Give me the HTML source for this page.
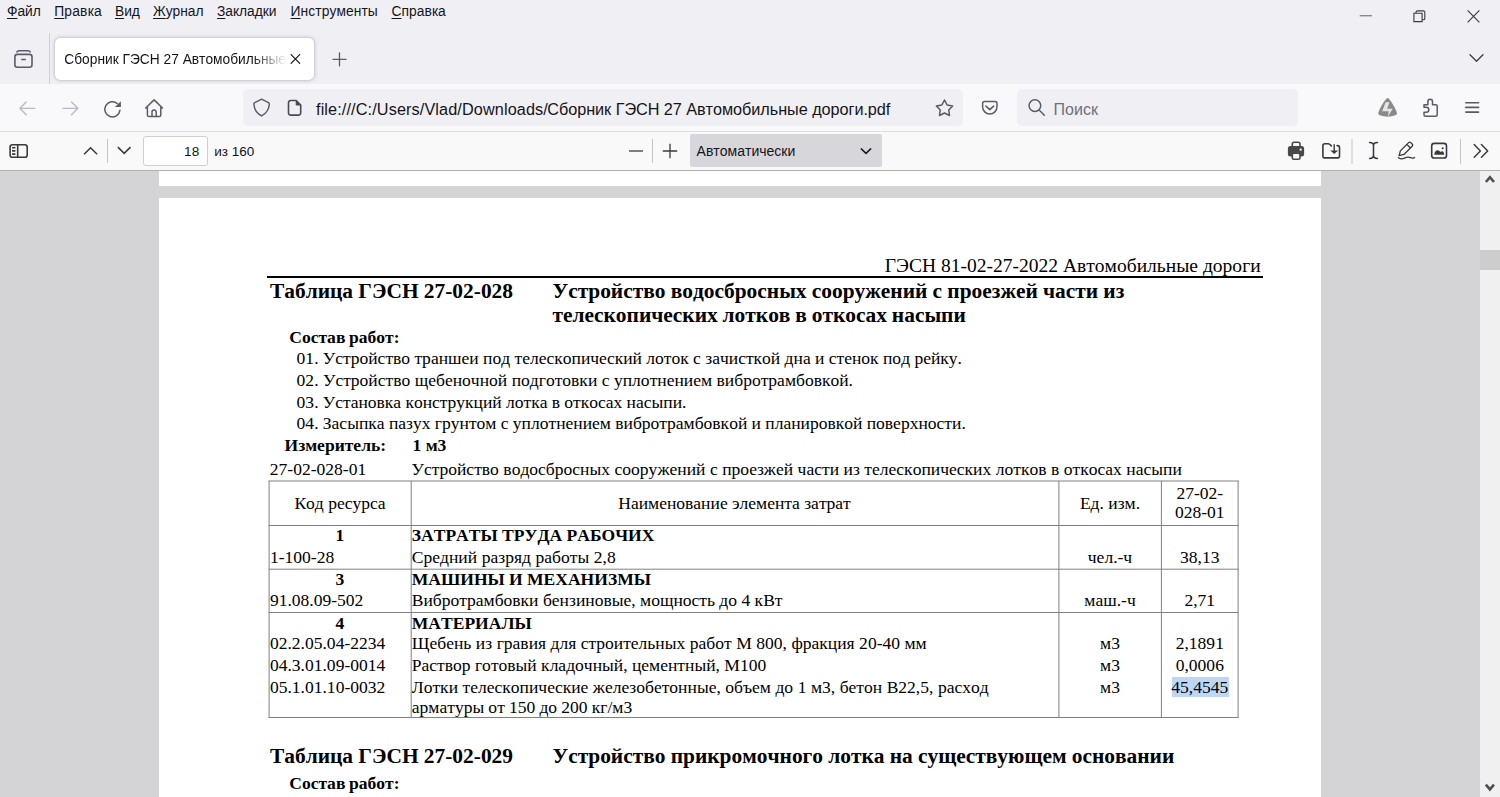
<!DOCTYPE html>
<html lang="ru">
<head>
<meta charset="utf-8">
<title>Сборник ГЭСН 27 Автомобильные дороги.pdf</title>
<style>
*{box-sizing:border-box}
html,body{margin:0;padding:0}
body{width:1500px;height:797px;overflow:hidden;position:relative;background:#d4d4d7;font-family:"Liberation Serif",serif;color:#000}
.t{position:absolute;line-height:1;white-space:pre;font-family:"Liberation Serif",serif;color:#000;font-kerning:none}
.t.s{font-family:"Liberation Sans",sans-serif}
.t u{text-decoration:underline;text-decoration-thickness:1px;text-underline-offset:1.5px}
.ic{position:absolute;display:block;overflow:visible}
#titlebar{position:absolute;left:0;top:0;width:1500px;height:84px;background:#f0f0f4}
#navbar{position:absolute;left:0;top:84px;width:1500px;height:48px;background:#f9f9fb;border-bottom:1px solid #dcdce1}
#pdfbar{position:absolute;left:0;top:132px;width:1500px;height:39px;background:#f9f9fa;border-bottom:1px solid #b0b0b2}
#tab{position:absolute;left:55px;top:38px;width:259px;height:41.500px;background:#fff;border-radius:5px;box-shadow:0 0 4px rgba(60,60,80,.34),0 0 1px rgba(60,60,80,.3)}
.field{position:absolute;background:#f0f0f4;border-radius:5px}
.vsep{position:absolute;width:1px}
#pgin{position:absolute;left:143px;top:136px;width:65px;height:30px;background:#fff;border:1px solid #cfcfd3;border-radius:3px}
#zsel{position:absolute;left:690px;top:134px;width:191.500px;height:33px;background:#d7d7db;border-radius:2px}
#viewer{position:absolute;left:0;top:171px;width:1479px;height:626px;background:#d4d4d7;overflow:hidden}
.page{position:absolute;left:158.500px;width:1162.500px;background:#fff}
.rule{position:absolute;background:#000}
.sel{position:absolute;background:#bfd7f6}
#sb{position:absolute;left:1479.500px;top:171px;width:20.500px;height:626px;background:#f0f0f0}
#sb .thumb{position:absolute;left:0;top:79px;width:20.500px;height:20px;background:#cdcdcd}
</style>
</head>
<body>
<main id="document">
<div id="viewer">
<div class="page" style="top:0;height:15px"></div>
<div class="page" style="top:27px;height:640px"></div>
</div>
<div class="t" style="top:256.28px;font-size:19.55px;left:360.5999999999999px;width:900px;text-align:right;">ГЭСН 81-02-27-2022 Автомобильные дороги</div>
<div class="rule" style="left:266.5px;top:276px;width:996px;height:2px"></div>
<div class="t" style="top:281.01px;font-size:21.42px;left:270px;font-weight:bold;word-spacing:-0.102px;">Таблица ГЭСН 27-02-028</div>
<div class="t" style="top:281.01px;font-size:21.42px;left:552.5px;font-weight:bold;word-spacing:-0.104px;">Устройство водосбросных сооружений с проезжей части из</div>
<div class="t" style="top:305.01px;font-size:21.42px;left:552.5px;font-weight:bold;word-spacing:-0.441px;">телескопических лотков в откосах насыпи</div>
<div class="t" style="top:329.25px;font-size:17.55px;left:289.3px;font-weight:bold;word-spacing:-0.738px;">Состав работ:</div>
<div class="t" style="top:350.35px;font-size:17.55px;left:296.6px;word-spacing:-0.034px;">01. Устройство траншеи под телескопический лоток с зачисткой дна и стенок под рейку.</div>
<div class="t" style="top:371.95px;font-size:17.55px;left:296.6px;word-spacing:0.082px;">02. Устройство щебеночной подготовки с уплотнением вибротрамбовкой.</div>
<div class="t" style="top:393.55px;font-size:17.55px;left:296.6px;word-spacing:-0.108px;">03. Установка конструкций лотка в откосах насыпи.</div>
<div class="t" style="top:415.15px;font-size:17.55px;left:296.6px;word-spacing:-0.087px;">04. Засыпка пазух грунтом с уплотнением вибротрамбовкой и планировкой поверхности.</div>
<div class="t" style="top:436.75px;font-size:17.55px;left:284.5px;font-weight:bold;">Измеритель:</div>
<div class="t" style="top:436.75px;font-size:17.55px;left:412.5px;font-weight:bold;">1 м3</div>
<div class="t" style="top:461.45px;font-size:17.55px;left:269.8px;">27-02-028-01</div>
<div class="t" style="top:461.45px;font-size:17.55px;left:411.6px;word-spacing:0.126px;">Устройство водосбросных сооружений с проезжей части из телескопических лотков в откосах насыпи</div>
<svg class="ic" style="left:0;top:0" width="1500" height="797" viewBox="0 0 1500 797"><path d="M268.6 481.0H1238.6M268.6 525.5H1238.6M268.6 569.2H1238.6M268.6 612.5H1238.6M268.6 717.5H1238.6M269.1 481.0V717.5M411.2 481.0V717.5M1058.9 481.0V717.5M1161.4 481.0V717.5M1238.1 481.0V717.5" fill="none" stroke="#808080" stroke-width="1"/></svg>
<div class="sel" style="left:1172px;top:677px;width:57px;height:20px"></div>
<div class="t" style="top:495.25px;font-size:17.55px;left:40px;width:600px;text-align:center;">Код ресурса</div>
<div class="t" style="top:495.25px;font-size:17.55px;left:434.5px;width:600px;text-align:center;">Наименование элемента затрат</div>
<div class="t" style="top:495.25px;font-size:17.55px;left:810px;width:600px;text-align:center;">Ед. изм.</div>
<div class="t" style="top:484.65px;font-size:17.55px;left:899.8px;width:600px;text-align:center;">27-02-</div>
<div class="t" style="top:504.25px;font-size:17.55px;left:899.8px;width:600px;text-align:center;">028-01</div>
<div class="t" style="top:527.35px;font-size:17.55px;left:40px;width:600px;text-align:center;font-weight:bold;">1</div>
<div class="t" style="top:527.35px;font-size:17.55px;left:411.8px;font-weight:bold;word-spacing:0.047px;">ЗАТРАТЫ ТРУДА РАБОЧИХ</div>
<div class="t" style="top:549.15px;font-size:17.55px;left:269.9px;">1-100-28</div>
<div class="t" style="top:549.15px;font-size:17.55px;left:411.8px;word-spacing:0.211px;">Средний разряд работы 2,8</div>
<div class="t" style="top:549.15px;font-size:17.55px;left:810px;width:600px;text-align:center;">чел.-ч</div>
<div class="t" style="top:549.15px;font-size:17.55px;left:899.8px;width:600px;text-align:center;">38,13</div>
<div class="t" style="top:570.75px;font-size:17.55px;left:40px;width:600px;text-align:center;font-weight:bold;">3</div>
<div class="t" style="top:570.75px;font-size:17.55px;left:411.8px;font-weight:bold;word-spacing:-0.052px;">МАШИНЫ И МЕХАНИЗМЫ</div>
<div class="t" style="top:591.95px;font-size:17.55px;left:269.9px;">91.08.09-502</div>
<div class="t" style="top:591.95px;font-size:17.55px;left:411.8px;word-spacing:0.012px;">Вибротрамбовки бензиновые, мощность до 4 кВт</div>
<div class="t" style="top:591.95px;font-size:17.55px;left:810px;width:600px;text-align:center;">маш.-ч</div>
<div class="t" style="top:591.95px;font-size:17.55px;left:899.8px;width:600px;text-align:center;">2,71</div>
<div class="t" style="top:614.65px;font-size:17.55px;left:40px;width:600px;text-align:center;font-weight:bold;">4</div>
<div class="t" style="top:614.65px;font-size:17.55px;left:411.8px;font-weight:bold;">МАТЕРИАЛЫ</div>
<div class="t" style="top:635.45px;font-size:17.55px;left:269.9px;">02.2.05.04-2234</div>
<div class="t" style="top:635.45px;font-size:17.55px;left:411.8px;word-spacing:0.106px;">Щебень из гравия для строительных работ М 800, фракция 20-40 мм</div>
<div class="t" style="top:635.45px;font-size:17.55px;left:810px;width:600px;text-align:center;">м3</div>
<div class="t" style="top:635.45px;font-size:17.55px;left:899.8px;width:600px;text-align:center;">2,1891</div>
<div class="t" style="top:656.95px;font-size:17.55px;left:269.9px;">04.3.01.09-0014</div>
<div class="t" style="top:656.95px;font-size:17.55px;left:411.8px;word-spacing:-0.029px;">Раствор готовый кладочный, цементный, М100</div>
<div class="t" style="top:656.95px;font-size:17.55px;left:810px;width:600px;text-align:center;">м3</div>
<div class="t" style="top:656.95px;font-size:17.55px;left:899.8px;width:600px;text-align:center;">0,0006</div>
<div class="t" style="top:678.65px;font-size:17.55px;left:269.9px;">05.1.01.10-0032</div>
<div class="t" style="top:678.65px;font-size:17.55px;left:411.8px;word-spacing:0.117px;">Лотки телескопические железобетонные, объем до 1 м3, бетон В22,5, расход</div>
<div class="t" style="top:678.65px;font-size:17.55px;left:810px;width:600px;text-align:center;">м3</div>
<div class="t" style="top:678.65px;font-size:17.55px;left:899.8px;width:600px;text-align:center;">45,4545</div>
<div class="t" style="top:698.75px;font-size:17.55px;left:411.8px;word-spacing:-0.211px;">арматуры от 150 до 200 кг/м3</div>
<div class="t" style="top:745.91px;font-size:21.42px;left:270px;font-weight:bold;word-spacing:-0.102px;">Таблица ГЭСН 27-02-029</div>
<div class="t" style="top:745.91px;font-size:21.42px;left:552.5px;font-weight:bold;word-spacing:-0.124px;">Устройство прикромочного лотка на существующем основании</div>
<div class="t" style="top:775.25px;font-size:17.55px;left:289.3px;font-weight:bold;word-spacing:-0.738px;">Состав работ:</div>
<div id="sb"><div class="thumb"></div></div>
<svg class="ic" style="left:0;top:0" width="1500" height="797" viewBox="0 0 1500 797"><path d="M1485.900 182L1489.950 177.200L1494 182M1485.850 784.600L1489.900 789.400L1493.950 784.600" fill="none" stroke="#4f4f4f" stroke-width="2.600"/></svg>
</main>
<header id="chrome">
<div id="titlebar"></div>
<div id="navbar"></div>
<div id="pdfbar"></div>
<div class="t s" style="top:5.10px;font-size:13.8px;left:7px;color:#15141a;letter-spacing:-0.059px;"><u>Ф</u>айл</div>
<div class="t s" style="top:5.10px;font-size:13.8px;left:54.2px;color:#15141a;letter-spacing:0.215px;"><u>П</u>равка</div>
<div class="t s" style="top:5.10px;font-size:13.8px;left:115px;color:#15141a;letter-spacing:-0.090px;"><u>В</u>ид</div>
<div class="t s" style="top:5.10px;font-size:13.8px;left:153px;color:#15141a;letter-spacing:-0.029px;"><u>Ж</u>урнал</div>
<div class="t s" style="top:5.10px;font-size:13.8px;left:217px;color:#15141a;letter-spacing:-0.022px;"><u>З</u>акладки</div>
<div class="t s" style="top:5.10px;font-size:13.8px;left:290.6px;color:#15141a;letter-spacing:0.078px;"><u>И</u>нструменты</div>
<div class="t s" style="top:5.10px;font-size:13.8px;left:391.5px;color:#15141a;letter-spacing:0.067px;"><u>С</u>правка</div>
<svg class="ic" style="left:1359px;top:9px" width="14" height="14" viewBox="0 0 14 14"><path d="M0.700 6.700H13" stroke="#88888e" stroke-width="1.400" fill="none"/></svg>
<svg class="ic" style="left:1413px;top:10px" width="13" height="13" viewBox="0 0 13 13"><path d="M0.9 3.2h8.2v8.4H0.9z M3 3.2V2.2a1.3 1.3 0 0 1 1.3-1.3h6.2a1.3 1.3 0 0 1 1.3 1.3v6.2a1.3 1.3 0 0 1-1.3 1.3H9.1" stroke="#3a3944" stroke-width="1.1" fill="none"/></svg>
<svg class="ic" style="left:1467px;top:10px" width="13" height="13" viewBox="0 0 13 13"><path d="M0.6 0.4L12.4 12.4M12.4 0.4L0.6 12.4" stroke="#3a3944" stroke-width="1.15" fill="none"/></svg>
<div class="vsep" style="left:49px;top:33px;height:51px;background:#cfcfd8"></div>
<div id="tab"></div>
<div class="t s" style="top:53.04px;font-size:13.75px;left:64.3px;color:#15141a;width:223px;overflow:hidden;-webkit-mask-image:linear-gradient(to right,#000 188px,transparent 223px);mask-image:linear-gradient(to right,#000 188px,transparent 223px);">Сборник ГЭСН 27 Автомобильные</div>
<svg class="ic" style="left:1469px;top:53px" width="16" height="10" viewBox="0 0 16 10"><path d="M1 1.7L7.5 8.2L14 1.7" stroke="#3a3944" stroke-width="1.3" fill="none" stroke-linecap="round" stroke-linejoin="round"/></svg>
<svg class="ic" style="left:18.45px;top:99.15px;color:#b9b9c0;" width="18.7" height="18.7" viewBox="0 0 16 16"><path d="M14.4 8H1.8M7 2.6L1.6 8L7 13.4" fill="none" stroke="currentColor" stroke-width="1.2" stroke-linecap="round" stroke-linejoin="round"/></svg>
<svg class="ic" style="left:61.25px;top:99.15px;color:#b9b9c0;" width="18.7" height="18.7" viewBox="0 0 16 16"><path d="M1.6 8H14.2M9 2.6L14.4 8L9 13.4" fill="none" stroke="currentColor" stroke-width="1.2" stroke-linecap="round" stroke-linejoin="round"/></svg>
<div class="field" style="left:243px;top:89px;width:720px;height:37px"></div>
<div class="t s" style="top:101.19px;font-size:16.24px;left:316px;color:#15141a;letter-spacing:0.116px;">file:///C:/Users/Vlad/Downloads/</div>
<div class="t s" style="top:101.19px;font-size:16.24px;left:547.3px;color:#15141a;letter-spacing:-0.048px;">Сборник ГЭСН 27 Автомобильные дороги.pdf</div>
<div class="field" style="left:1017px;top:89px;width:281px;height:37px"></div>
<div class="t s" style="top:101.88px;font-size:16.0px;left:1053.6px;color:#6f6f7b;">Поиск</div>
<div class="vsep" style="left:107px;top:139px;height:23.500px;background:#c4c4c8"></div>
<div id="pgin"></div>
<div class="t s" style="top:144.97px;font-size:13.6px;left:-700.8px;width:900px;text-align:right;color:#15141a;">18</div>
<div class="t s" style="top:145.05px;font-size:13.5px;left:214.2px;color:#15141a;">из 160</div>
<svg class="ic" style="left:628px;top:143px" width="16" height="16" viewBox="0 0 16 16"><path d="M1 8H15" stroke="#3a3a3e" stroke-width="1.3" fill="none"/></svg>
<div class="vsep" style="left:652px;top:139px;height:23.5px;background:#c4c4c8"></div>
<svg class="ic" style="left:662px;top:143px" width="16" height="16" viewBox="0 0 16 16"><path d="M0.8 8H15.2M8 0.8V15.2" stroke="#3a3a3e" stroke-width="1.3" fill="none"/></svg>
<div id="zsel"></div>
<div class="t s" style="top:144.04px;font-size:14.0px;left:696.6px;color:#15141a;">Автоматически</div>
<svg class="ic" style="left:860px;top:147px" width="12" height="9" viewBox="0 0 12 9"><path d="M1.3 1.9L6 6.4L10.7 1.9" stroke="#1c1b22" stroke-width="1.5" fill="none" stroke-linecap="round" stroke-linejoin="round"/></svg>
<div class="vsep" style="left:1351px;top:138.500px;height:25px;width:2px;background:#dedee1"></div>
<svg class="ic" style="left:1364.00px;top:141.30px;color:#3a3a3e;" width="19" height="19" viewBox="0 0 16 16"><path d="M4.700 1.200c2 0 3.300 .9 3.300 2.700c0-1.800 1.300-2.700 3.300-2.700M4.700 14.800c2 0 3.300-.9 3.300-2.700c0 1.800 1.300 2.700 3.300 2.700M8 3.900v8.200" fill="none" stroke="currentColor" stroke-width="1.300" stroke-linecap="round"/></svg>
<div class="vsep" style="left:1460px;top:138.500px;height:25px;background:#c4c4c8"></div>
<svg class="ic" style="left:0;top:0" width="1500" height="797" viewBox="0 0 1500 797"><g fill="none" stroke="#5b5b66" stroke-width="1.6" stroke-linecap="round"><rect x="14.9" y="54.4" width="17.1" height="12.8" rx="2.4"/><path d="M16.9 51.9Q17.5 50.7 19 50.7H28Q29.500 50.7 30.100 51.9M21.800 59.500H25.200"/></g><path d="M291.100 54.700L299.700 63.300M299.700 54.700L291.100 63.300" stroke="#15141a" stroke-width="1.200" fill="none" stroke-linecap="round"/><path d="M339.500 52.800V65.800M333 59.300H346" stroke="#5b5b66" stroke-width="1.300" fill="none" stroke-linecap="round"/><path d="M119.93 110.36A7.6 7.6 0 1 1 117.3 103.5" fill="none" stroke="#5b5b66" stroke-width="1.5" stroke-linecap="round"/><path d="M120.9 101.2V106.9H114.9z" fill="#5b5b66"/><path d="M145.7 108L154.1 99.900L162.500 108M147.400 106.300V115a1.600 1.600 0 0 0 1.600 1.600h10.200a1.600 1.600 0 0 0 1.600-1.600V106.300M152 116.400V112a2.100 2.100 0 0 1 4.200 0V116.400" fill="none" stroke="#5b5b66" stroke-width="1.500" stroke-linecap="round" stroke-linejoin="round"/><path d="M261.600 99.200L268.400 102.600Q269.400 103.100 269.300 104.200C268.900 109.600 266.600 113.200 261.600 115.900C256.600 113.200 254.300 109.600 253.900 104.200Q253.800 103.100 254.800 102.600z" fill="none" stroke="#5b5b66" stroke-width="1.500" stroke-linejoin="round"/><path d="M290.700 100.500H296.200L300.700 105V112.900a2.200 2.200 0 0 1-2.200 2.200H290.700a2.200 2.200 0 0 1-2.200-2.200V102.700a2.200 2.200 0 0 1 2.200-2.200z" fill="none" stroke="#4a4a55" stroke-width="1.600" stroke-linejoin="round"/><path d="M295.700 100.300V104.300a1.300 1.300 0 0 0 1.300 1.300H301z" fill="#4a4a55"/><path d="M944.50 100.00L947.12 104.97L952.65 105.92L948.73 109.95L949.54 115.50L944.50 113.02L939.46 115.50L940.27 109.95L936.35 105.92L941.88 104.97z" fill="none" stroke="#5b5b66" stroke-width="1.500" stroke-linejoin="round"/><path d="M984.600 101.500H995a2 2 0 0 1 2 2V106.800a7.200 7.200 0 0 1-14.400 0V103.500a2 2 0 0 1 2-2z" fill="none" stroke="#5b5b66" stroke-width="1.500"/><path d="M985.900 106.100L989.800 109.600L993.700 106.100" fill="none" stroke="#5b5b66" stroke-width="1.500" stroke-linecap="round" stroke-linejoin="round"/><circle cx="1034.900" cy="105.600" r="5.850" fill="none" stroke="#5b5b66" stroke-width="1.500"/><path d="M1039.100 109.900L1044.300 115.300" stroke="#5b5b66" stroke-width="1.500" stroke-linecap="round"/><path d="M1387.6 98.1C1389 98.1 1394.200 105.500 1396.700 112.200C1397.300 113.900 1396.800 114.700 1395.300 115.300C1390.500 117.200 1384.700 117.200 1379.900 115.300C1378.400 114.700 1377.900 113.900 1378.500 112.200C1381 105.500 1386.200 98.100 1387.600 98.100z" fill="#8a8a88"/><path d="M1385.600 102.200H1389.500L1387.100 108.800H1392.700L1387.600 116.900L1388.800 111.300H1382.200z" fill="#e6e6e6"/><path d="M1424 104.800H1427.900V101.600a2.300 2.300 0 0 1 4.600 0V104.800H1435.700a1.500 1.500 0 0 1 1.500 1.500V114.700a1.500 1.500 0 0 1-1.500 1.500H1425.500a1.500 1.500 0 0 1-1.500-1.500V112.300H1426.300a2.500 2.500 0 0 0 0-5H1424z" fill="none" stroke="#5b5b66" stroke-width="1.500" stroke-linejoin="round"/><path d="M1465.800 102.700H1478.600M1465.800 107.400H1478.600M1465.800 112.100H1478.600" stroke="#5b5b66" stroke-width="1.600" stroke-linecap="round" fill="none"/><g fill="none" stroke="#3a3a3e" stroke-width="1.600"><rect x="10.1" y="144.7" width="17.100" height="12.600" rx="2.300"/><path d="M17.700 144.700V157.300M12.100 147.700h3.300M12.100 150.900h3.300M12.100 154.100h3.300"/></g><path d="M84.100 154.300L90.600 147.800L97.100 154.300M117.900 147.100L124.200 153.400L130.500 147.100" fill="none" stroke="#3a3a3e" stroke-width="1.500"/><g><rect x="1292.300" y="142.200" width="7.700" height="7" rx="1.900" fill="#f9f9fa" stroke="#48484b" stroke-width="1.600"/><rect x="1287.900" y="145.900" width="16.200" height="10.700" rx="2.500" fill="#48484b"/><rect x="1292.300" y="153.300" width="7.700" height="5.900" rx="1.500" fill="#f9f9fa" stroke="#48484b" stroke-width="1.600"/><circle cx="1300.700" cy="149.700" r="1.150" fill="#f9f9fa"/></g><path d="M1331.300 146C1330.400 144.600 1329.700 143.800 1328.300 143.800H1324.900a2 2 0 0 0-2 2V155.900a2 2 0 0 0 2 2H1337.500a2 2 0 0 0 2-2V147.600a2 2 0 0 0-2-2H1337.100" fill="none" stroke="#3a3a3e" stroke-width="1.600" stroke-linecap="round"/><path d="M1334.200 144.300V151" stroke="#3a3a3e" stroke-width="1.400" fill="none"/><path d="M1330.200 150.400H1338.200L1334.200 154z" fill="#3a3a3e"/><g transform="translate(1399.100 155.700) rotate(45)" fill="none" stroke="#3a3a3e" stroke-width="1.350" stroke-linejoin="round"><path d="M0 0L-2.500 -4.300V-16a1.500 1.500 0 0 1 1.500 -1.500H1a1.500 1.500 0 0 1 1.500 1.500V-4.300z"/><path d="M-2.500 -13.500H2.500"/></g><path d="M1398.400 157.700C1400.500 159.100 1402.500 159.100 1404.500 158.100S1408.500 156.900 1410.500 157.700S1413.500 158.300 1414.600 157.400" fill="none" stroke="#3a3a3e" stroke-width="1.300" stroke-linecap="round"/><rect x="1431.700" y="143.400" width="14.800" height="14.600" rx="2.600" fill="none" stroke="#3a3a3e" stroke-width="1.600"/><path d="M1434.300 154.700C1434.500 152 1435.800 150.300 1437.600 150.300C1438.900 150.300 1439.700 151 1440.300 152C1440.800 151.500 1441.400 151.200 1442.100 151.200C1443.500 151.200 1444.100 152.600 1444.100 154.700z" fill="#3a3a3e"/><circle cx="1442.700" cy="148.300" r="1.050" fill="#3a3a3e"/><path d="M1474.200 144.500L1480.400 150.900L1474.200 157.300M1481.400 144.500L1487.700 150.900L1481.400 157.300" stroke="#3a3a3e" stroke-width="1.450" fill="none" stroke-linecap="round" stroke-linejoin="round"/></svg>
</header>
</body>
</html>
